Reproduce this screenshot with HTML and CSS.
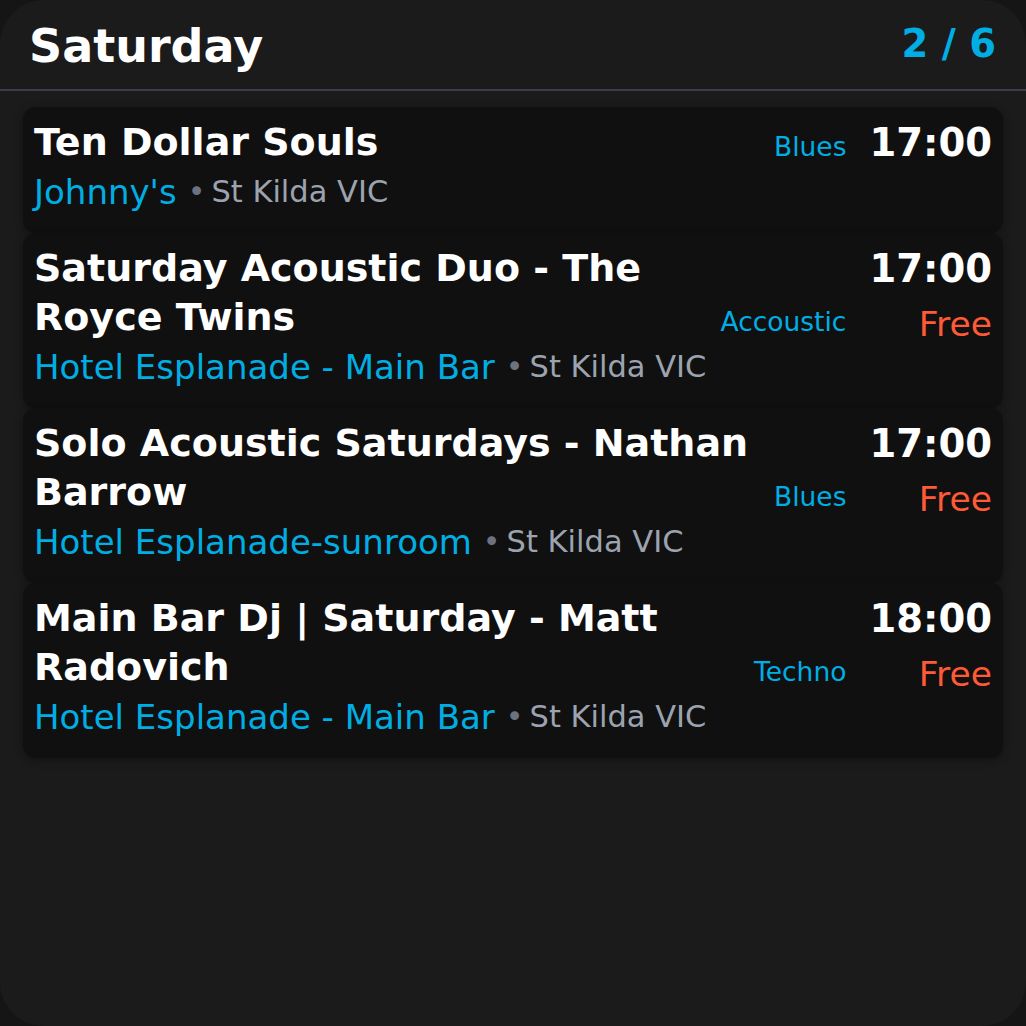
FILE: index.html
```html
<!DOCTYPE html>
<html lang="en">
<head>
<meta charset="utf-8">
<title>Saturday</title>
<link rel="stylesheet" href="styles.css">
</head>
<body>
<div class="screen">
  <header class="header">
    <h1 class="day">Saturday</h1>
    <div class="pager">2 / 6</div>
  </header>
  <main class="list">
    <article class="card">
      <div class="title">Ten Dollar Souls</div>
      <div class="genre">Blues</div>
      <div class="meta"><div class="time">17:00</div></div>
      <div class="venue"><span class="place">Johnny's</span><span class="dot">•</span><span class="suburb">St Kilda VIC</span></div>
    </article>
    <article class="card">
      <div class="title">Saturday Acoustic Duo - The Royce Twins</div>
      <div class="genre">Accoustic</div>
      <div class="meta"><div class="time">17:00</div><div class="price">Free</div></div>
      <div class="venue"><span class="place">Hotel Esplanade - Main Bar</span><span class="dot">•</span><span class="suburb">St Kilda VIC</span></div>
    </article>
    <article class="card">
      <div class="title">Solo Acoustic Saturdays - Nathan Barrow</div>
      <div class="genre">Blues</div>
      <div class="meta"><div class="time">17:00</div><div class="price">Free</div></div>
      <div class="venue"><span class="place">Hotel Esplanade-sunroom</span><span class="dot">•</span><span class="suburb">St Kilda VIC</span></div>
    </article>
    <article class="card">
      <div class="title">Main Bar Dj | Saturday - Matt Radovich</div>
      <div class="genre">Techno</div>
      <div class="meta"><div class="time">18:00</div><div class="price">Free</div></div>
      <div class="venue"><span class="place">Hotel Esplanade - Main Bar</span><span class="dot">•</span><span class="suburb">St Kilda VIC</span></div>
    </article>
  </main>
</div>
</body>
</html>
```
FILE: styles.css
```css
html, body {
  margin: 0;
  padding: 0;
  background: #151515;
}
body {
  font-family: "DejaVu Sans", "Liberation Sans", sans-serif;
  color: #ffffff;
}
.screen {
  width: 1026px;
  height: 1026px;
  box-sizing: border-box;
  background: #1b1b1b;
  border-radius: 44px;
  overflow: hidden;
}
.header {
  display: flex;
  align-items: center;
  justify-content: space-between;
  height: 91px;
  box-sizing: border-box;
  padding: 3px 30px 0 29px;
  border-bottom: 2px solid #3a3f4b;
}
.day {
  margin: 0;
  font-size: 46px;
  font-weight: bold;
  line-height: 52px;
}
.pager {
  font-size: 38.5px;
  font-weight: bold;
  color: #00aee3;
  line-height: 43px;
  margin-bottom: 6px;
}
.list {
  display: flex;
  flex-direction: column;
  padding: 16px 23px;
}
.card {
  display: grid;
  grid-template-columns: 1fr auto auto;
  grid-template-rows: auto auto;
  padding: 11px 11px 19px 11px;
  background: #101010;
  border-radius: 13px;
  box-shadow: 0 2px 8px rgba(0, 0, 0, 0.35);
}
.title {
  grid-column: 1;
  grid-row: 1;
  font-size: 38px;
  font-weight: bold;
  line-height: 49px;
}
.genre {
  grid-column: 2;
  grid-row: 1;
  align-self: end;
  font-size: 26.5px;
  line-height: 31px;
  color: #00aee3;
  margin: 0 0 5px 8px;
  text-align: right;
}
.meta {
  grid-column: 3;
  grid-row: 1 / span 2;
  align-self: start;
  text-align: right;
  padding-top: 1px;
  margin-left: 23px;
}
.time {
  font-size: 38.5px;
  font-weight: bold;
  line-height: 48px;
}
.price {
  font-size: 34.5px;
  line-height: 44px;
  margin-top: 9px;
  color: #ff5a36;
}
.venue {
  grid-column: 1 / span 2;
  grid-row: 2;
  margin-top: 3px;
  font-size: 34px;
  line-height: 44px;
}
.place {
  color: #00aee3;
}
.dot {
  font-size: 30px;
  line-height: 1;
  vertical-align: 2px;
  color: #6b7280;
  margin: 0 6px 0 11px;
}
.suburb {
  font-size: 30.5px;
  line-height: 1;
  vertical-align: 2px;
  color: #9ca3af;
}
```
